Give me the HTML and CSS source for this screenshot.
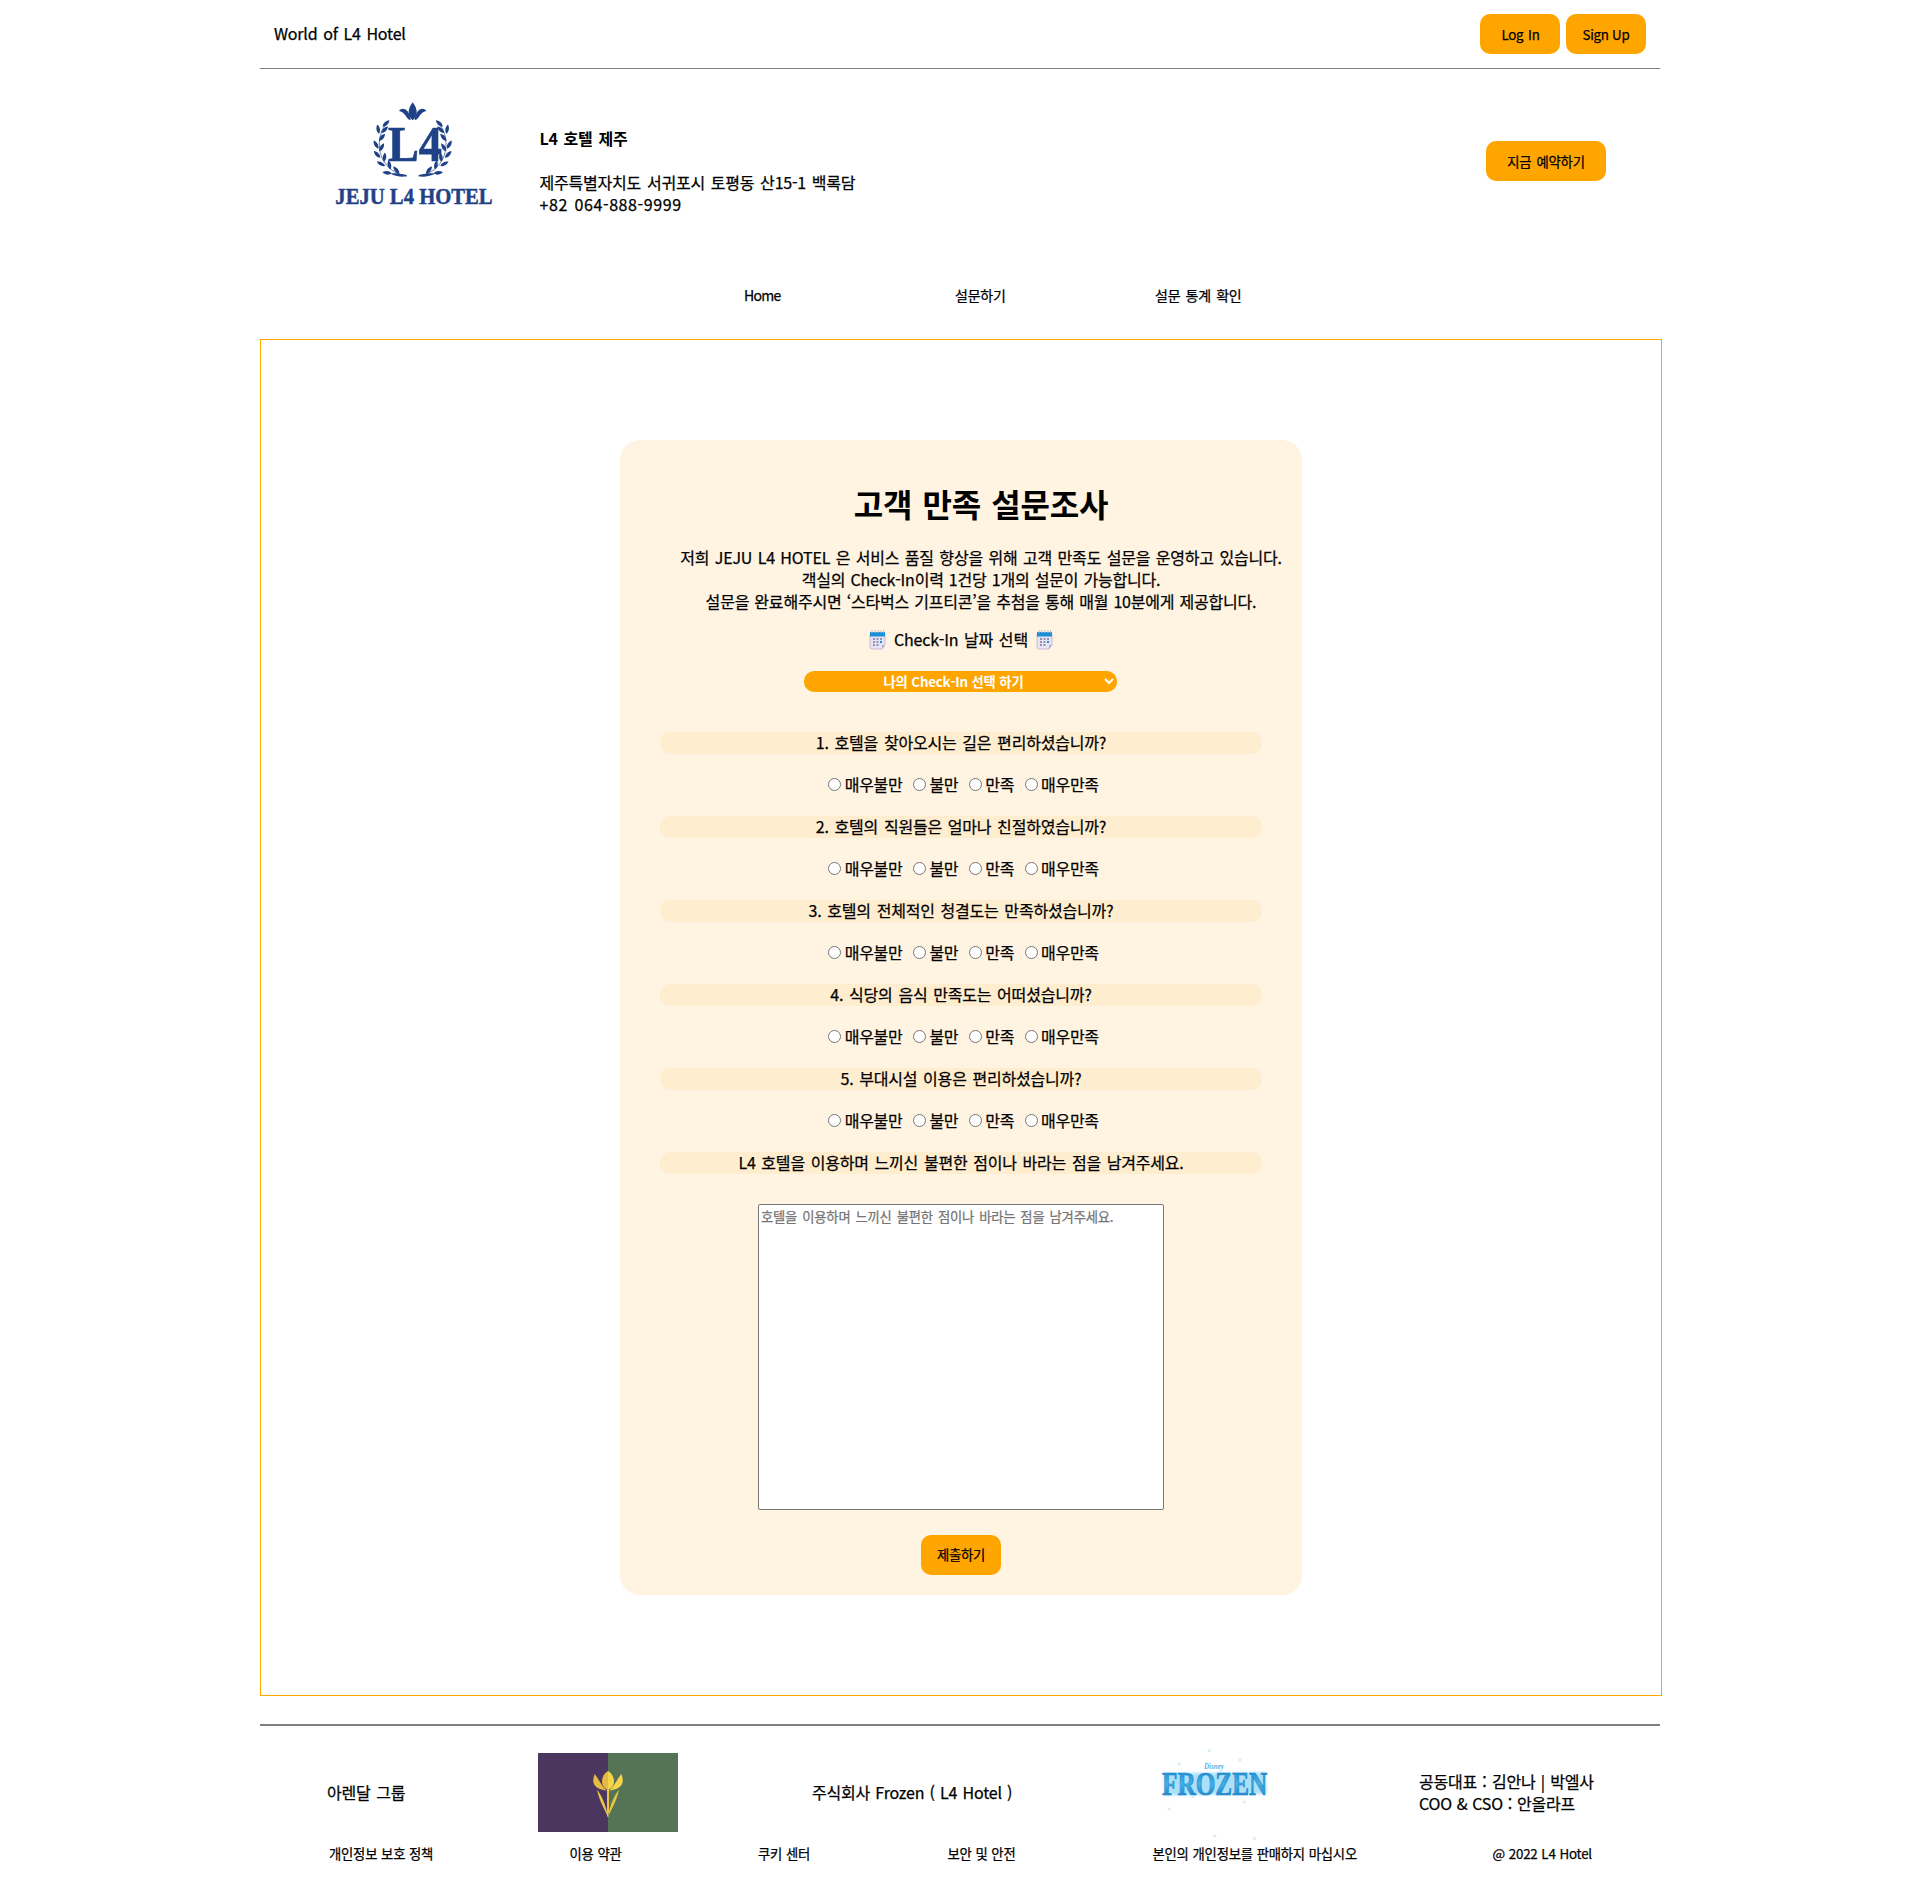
FILE: index.html
```
<!DOCTYPE html>
<html lang="ko">
<head>
<meta charset="utf-8">
<title>JEJU L4 HOTEL</title>
<link rel="stylesheet" href="styles.css">
</head>
<body>
<svg class="defs" aria-hidden="true">
  <defs>
    <path id="leaf" d="M0 0C6-7 18-8 28-1C20 6 8 7 0 0Z"/>
    <g id="branch">
      <path d="M260 258C215 252 176 215 178 158C180 128 190 110 206 94" fill="none" stroke="#1f4287" stroke-width="2"/>
      <path d="M260 255C240 250 226 249 214 250L214 253C230 260 245 261 260 259Z"/>
      <use href="#leaf" transform="translate(215 250) rotate(-172)"/>
      <use href="#leaf" transform="translate(238 251) rotate(-128)"/>
      <use href="#leaf" transform="translate(195 228) rotate(-150)"/>
      <use href="#leaf" transform="translate(211 238) rotate(-100)"/>
      <use href="#leaf" transform="translate(181 203) rotate(-132)"/>
      <use href="#leaf" transform="translate(192 215) rotate(-82)"/>
      <use href="#leaf" transform="translate(175 176) rotate(-118)"/>
      <use href="#leaf" transform="translate(178 184) rotate(-58)"/>
      <use href="#leaf" transform="translate(177 153) rotate(-48)"/>
      <use href="#leaf" transform="translate(177 131) rotate(-98)"/>
      <use href="#leaf" transform="translate(184 129) rotate(-42)"/>
      <use href="#leaf" transform="translate(188 110) rotate(-42)"/>
    </g>
    <linearGradient id="ice" x1="0" y1="0" x2="0" y2="1">
      <stop offset="0" stop-color="#1681c4"/><stop offset=".5" stop-color="#43b2e8"/><stop offset="1" stop-color="#1478c2"/>
    </linearGradient>
    <filter id="glow" x="-20%" y="-60%" width="140%" height="220%"><feGaussianBlur stdDeviation="5"/></filter>
    <path id="spark" d="M-5-5L5 5M5-5L-5 5M-3 0H3M0-3V3"/>
    <g id="calendar">
      <path d="M1 4h15v11l-3 4H3q-2 0-2-2z" fill="#e9e4f3" stroke="#b9b2cc" stroke-width=".8"/>
      <path d="M1 2h15v4.500H1z" fill="#1d8fd6"/>
      <path d="M3 0v3M6 0v3M9 0v3M12 0v3M14.500 0v3" stroke="#b5c3cf" stroke-width="1"/>
      <path d="M4 9h9M4 12h9M4 15h6" stroke="#77779a" stroke-width="1.700" stroke-dasharray="2 1.500"/>
      <path d="M11 11h2v2h-2z" fill="#1d8fd6"/>
      <path d="M16 15l-3 4v-4z" fill="#b9a9d4"/>
    </g>
  </defs>
</svg>
<div class="page">
  <div class="topbar">
    <span class="world">World of L4 Hotel</span>
    <button class="btn login">Log In</button>
    <button class="btn signup">Sign Up</button>
  </div>
  <header class="header">
    <svg class="logo" viewBox="0 0 570 390">
      <g fill="#1f4287">
        <path d="M278 37C260 60 264 80 278 91C292 80 296 60 278 37Z"/>
        <path d="M237 63C247 48 269 58 272 90C258 90 259 67 237 63ZM319 63C309 48 287 58 284 90C298 90 297 67 319 63Z"/>
        <use href="#branch"/>
        <use href="#branch" transform="translate(556 0) scale(-1 1)"/>
        <text class="mono" x="204" y="213" textLength="162" lengthAdjust="spacingAndGlyphs">L4</text>
        <text class="wordmark" x="46" y="342" textLength="472" lengthAdjust="spacingAndGlyphs">JEJU L4 HOTEL</text>
      </g>
    </svg>
    <div class="info">
      <strong class="name">L4 호텔 제주</strong>
      <div>제주특별자치도 서귀포시 토평동 산15-1 백록담</div>
      <div class="phone">+82 064-888-9999</div>
    </div>
    <button class="btn reserve">지금 예약하기</button>
  </header>
  <nav class="nav"><a class="home">Home</a><a>설문하기</a><a>설문 통계 확인</a></nav>
  <main class="main">
    <form class="card">
      <div class="intro">
        <h1>고객 만족 설문조사</h1>
        <p class="line1">저희 JEJU L4 HOTEL 은 서비스 품질 향상을 위해 고객 만족도 설문을 운영하고 있습니다.</p>
        <p class="line2">객실의 Check-In이력 1건당 1개의 설문이 가능합니다.</p>
        <p class="line3">설문을 완료해주시면 ‘스타벅스 기프티콘’을 추첨을 통해 매월 10분에게 제공합니다.</p>
      </div>
      <div class="checkin">
        <svg class="cal" viewBox="0 0 17 20"><use href="#calendar"/></svg>
        <span>Check-In 날짜 선택</span>
        <svg class="cal" viewBox="0 0 17 20"><use href="#calendar"/></svg>
      </div>
      <select class="select"><option>나의 Check-In 선택 하기</option></select>
      <div class="question">1. 호텔을 찾아오시는 길은 편리하셨습니까?</div>
      <div class="answers"><label><input type="radio" name="q1">매우불만</label><label><input type="radio" name="q1">불만</label><label><input type="radio" name="q1">만족</label><label><input type="radio" name="q1">매우만족</label></div>
      <div class="question">2. 호텔의 직원들은 얼마나 친절하였습니까?</div>
      <div class="answers"><label><input type="radio" name="q2">매우불만</label><label><input type="radio" name="q2">불만</label><label><input type="radio" name="q2">만족</label><label><input type="radio" name="q2">매우만족</label></div>
      <div class="question">3. 호텔의 전체적인 청결도는 만족하셨습니까?</div>
      <div class="answers"><label><input type="radio" name="q3">매우불만</label><label><input type="radio" name="q3">불만</label><label><input type="radio" name="q3">만족</label><label><input type="radio" name="q3">매우만족</label></div>
      <div class="question">4. 식당의 음식 만족도는 어떠셨습니까?</div>
      <div class="answers"><label><input type="radio" name="q4">매우불만</label><label><input type="radio" name="q4">불만</label><label><input type="radio" name="q4">만족</label><label><input type="radio" name="q4">매우만족</label></div>
      <div class="question">5. 부대시설 이용은 편리하셨습니까?</div>
      <div class="answers"><label><input type="radio" name="q5">매우불만</label><label><input type="radio" name="q5">불만</label><label><input type="radio" name="q5">만족</label><label><input type="radio" name="q5">매우만족</label></div>
      <div class="question">L4 호텔을 이용하며 느끼신 불편한 점이나 바라는 점을 남겨주세요.</div>
      <textarea class="opinion" placeholder="호텔을 이용하며 느끼신 불편한 점이나 바라는 점을 남겨주세요."></textarea>
      <button class="btn submit" type="button">제출하기</button>
    </form>
  </main>
  <footer class="footer">
    <div class="company">
      <span class="mid">아렌달 그룹</span>
      <svg class="flag" viewBox="0 0 420 237">
        <path fill="#4b365f" d="M0 0h210v237H0z"/><path fill="#557455" d="M210 0h210v237H210z"/>
        <path fill="#e3bb45" d="M210 54C187 68 187 98 205 108L210 112ZM170 63C160 88 166 109 207 113C192 102 185 82 170 63Z"/>
        <path fill="#f6d648" d="M210 54C233 68 233 98 215 108L210 112ZM250 63C260 88 254 109 213 113C228 102 235 82 250 63Z"/>
        <path fill="#e9c548" d="M207 108h6v82l-3 2-3-2zM177 110C190 125 204 155 210 192C198 165 185 145 177 110ZM243 110C230 125 216 155 210 192C222 165 235 145 243 110Z"/>
      </svg>
      <span class="mid frozen-co">주식회사 Frozen ( L4 Hotel )</span>
      <svg class="frozen" viewBox="0 0 420 330">
        <path d="M42 100L345 97L350 162L44 166Z" fill="#8fd6f8" filter="url(#glow)" opacity=".75"/>
        <text class="frozen-word" x="36" y="164" textLength="316" lengthAdjust="spacingAndGlyphs">FROZEN</text>
        <text class="disney" x="162" y="86" textLength="60" lengthAdjust="spacingAndGlyphs">Disney</text>
        <g stroke="#cfe8f7" stroke-width="2.500">
          <use href="#spark" x="178" y="32"/><use href="#spark" x="88" y="72"/><use href="#spark" x="270" y="60"/><use href="#spark" x="57" y="207"/><use href="#spark" x="128" y="170"/><use href="#spark" x="283" y="186"/><use href="#spark" x="194" y="288"/><use href="#spark" x="313" y="295"/>
        </g>
      </svg>
      <div class="people"><div class="ceo">공동대표 : 김안나 | 박엘사</div><div class="coo">COO &amp; CSO : 안올라프</div></div>
    </div>
    <div class="links"><a>개인정보 보호 정책</a><a>이용 약관</a><a>쿠키 센터</a><a>보안 및 안전</a><a class="nosale">본인의 개인정보를 판매하지 마십시오</a><a>@ 2022 L4 Hotel</a></div>
  </footer>
</div>
</body>
</html>
```
FILE: styles.css
```
* { box-sizing: border-box; }
body {
  margin: 0;
  background: #fff;
  color: #000;
  font: 400 16px/22px "Noto Sans CJK KR", sans-serif;
  letter-spacing: -0.2px;
  word-spacing: 1.5px;
  white-space: nowrap;
  -webkit-text-stroke: .25px;
}
h1, p { margin: 0; }
button, select, textarea { font: inherit; font-size: 13.333px; letter-spacing: inherit; word-spacing: inherit; }
svg { display: block; overflow: visible; -webkit-text-stroke: 0; }
.defs { width: 0; height: 0; position: absolute; overflow: hidden; }
.page { width: 1400px; margin: 0 auto; }
.btn {
  width: 80px;
  height: 40px;
  padding: 0;
  border: 0;
  border-radius: 10px;
  background: orange;
  color: #000;
}

.topbar { display: flex; align-items: flex-start; height: 69px; padding: 14px 14px 0; border-bottom: 1px solid gray; }
.world { margin: 8px auto 0 0; }
.login { margin-right: 6px; padding: 2px 0 0 1px; word-spacing: 1px; }
.signup { padding-top: 2px; word-spacing: 0; letter-spacing: -.3px; }

.header { display: flex; align-items: flex-start; height: 150px; padding: 0 54px 0 60px; }
.logo { width: 190px; height: 130px; margin-top: 21px; }
.mono { font: 700 150px "Liberation Serif", serif; letter-spacing: 0; stroke: #1f4287; stroke-width: 2px; }
.wordmark { font: 700 71px "Liberation Serif", serif; letter-spacing: 0; word-spacing: 0; stroke: #1f4287; stroke-width: 1.5px; }
.info { margin: 58px 0 0 29.500px; }
.name { display: block; margin-bottom: 22px; -webkit-text-stroke: 0; }
.phone { letter-spacing: .6px; }
.reserve { width: 120px; padding-top: 2px; margin: 72px 0 0 auto; }

.nav { display: grid; grid-template-columns: 210px 200px auto; height: 120px; padding: 65px 0 0 485px; font-size: 14px; }
.home { margin-left: -1px; letter-spacing: -.7px; }

.main { width: 1402px; height: 1357px; padding: 100px 0 0 359px; border: 1px solid orange; }
.card {
  display: flex;
  flex-direction: column;
  align-items: center;
  width: 682px;
  height: 1155px;
  padding: 41px 40px 20px;
  border-radius: 20px;
  background: #fff3e2;
}
.intro { padding-left: 40px; text-align: center; }
h1 { margin-bottom: 21px; font-size: 32px; line-height: 44px; font-weight: 700; -webkit-text-stroke: 0; }
.line1 { word-spacing: 1.25px; }
.line2, .line3 { word-spacing: .9px; }
.checkin { display: flex; align-items: center; gap: 8px; margin: 16px 0 21px; }
.cal { width: 17px; height: 20px; margin-top: 1px; }
.select {
  width: 313px;
  height: 21px;
  margin: 0 1px 20px 0;
  padding: 0 2px 0 0;
  border: 0;
  border-radius: 10px;
  background: orange;
  color: #fff;
  font-weight: 700;
  text-align: center;
  text-align-last: center;
  word-spacing: .2px;
  -webkit-text-stroke: 0;
}
.question {
  width: 602px;
  height: 22px;
  margin: 20px 0;
  border-radius: 10px;
  background: #ffedcf;
  line-height: 20px;
  text-align: center;
}
.answers { display: flex; gap: 10.500px; height: 22px; padding-left: 5px; line-height: 20px; }
.answers label { display: flex; height: 20px; align-items: center; letter-spacing: -.3px; }
.answers input { width: 13px; height: 13px; margin: 0 3.500px 0 0; }
.opinion {
  width: 406px;
  height: 306px;
  margin: 10px 0 25px;
  padding: 1px 2px;
  border: 1px solid #767676;
  border-radius: 2px;
  resize: none;
  white-space: pre-wrap;
}
.opinion::placeholder { color: #757575; }

.footer { margin-top: 28px; border-top: 2px solid gray; }
.company { display: grid; grid-template-columns: 211px 274px 338px 269px auto; align-items: start; height: 117px; padding-left: 67px; }
.mid { margin-top: 55px; }
.frozen-co { word-spacing: 1px; }
.flag { width: 140px; height: 79px; margin-top: 27px; }
.frozen { width: 140px; height: 110px; margin: 14px 0 -10px; }
.frozen-word { font: 700 98px "Liberation Serif", serif; letter-spacing: 0; fill: url(#ice); stroke: #1c83c8; stroke-width: 2px; }
.disney { font: italic 700 25px "Liberation Serif", serif; fill: #58b4e4; letter-spacing: 0; }
.people { margin-top: 44px; }
.ceo { word-spacing: 1px; }
.coo { word-spacing: .6px; }
.links { display: grid; grid-template-columns: 240.500px 188.500px 189.500px 205px 340px auto; padding-left: 69px; font-size: 13.333px; word-spacing: .3px; }
```
